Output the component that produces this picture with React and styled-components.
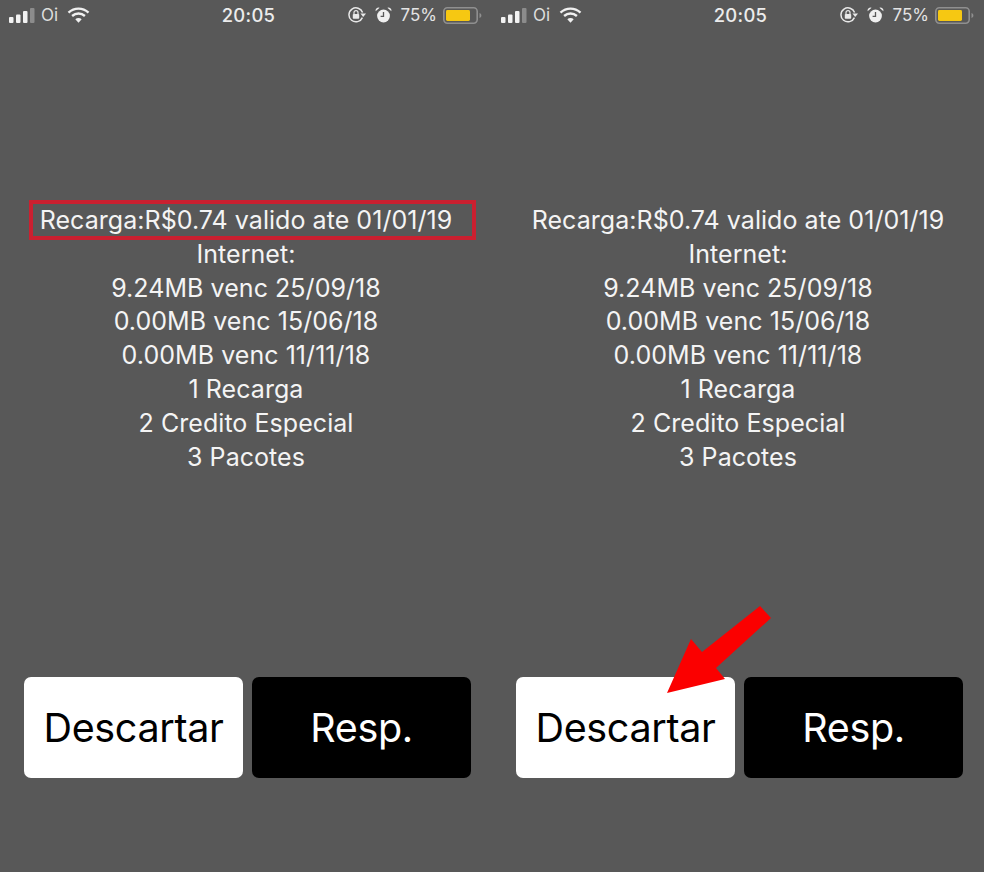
import React from "react";
import styled, { createGlobalStyle } from "styled-components";

const GlobalStyle = createGlobalStyle`
  html, body {
    margin: 0;
    padding: 0;
    background: #585858;
  }
`;

const Page = styled.div`
  display: flex;
  width: 984px;
  height: 872px;
  overflow: hidden;
  background: #585858;
  font-family: Inter, "Liberation Sans", sans-serif;
`;

const Screen = styled.div`
  position: relative;
  display: flex;
  flex-direction: column;
  width: 492px;
  height: 872px;
`;

const StatusBar = styled.div`
  display: grid;
  grid-template-columns: 1fr auto 1fr;
  align-items: center;
  height: 30px;
  padding: 0 10px 0 9px;
  color: #e9e9e9;
  font-size: 17px;
`;

const StatusLeft = styled.div`
  display: flex;
  align-items: center;
`;

const StatusRight = styled.div`
  display: flex;
  align-items: center;
  justify-content: flex-end;
`;

const Carrier = styled.span`
  margin: 0 9px 0 6px;
  font-size: 17px;
  color: #dddddd;
`;

const Clock = styled.span`
  padding-left: 6px;
  font-size: 18.4px;
  font-weight: 500;
  letter-spacing: 0.3px;
  color: #ececec;
`;

const Percent = styled.span`
  margin: 0 6px 0 9px;
  font-size: 17px;
  color: #e4e4e4;
`;

const Spacer = styled.span`
  width: 9px;
`;

const Message = styled.div`
  position: relative;
  margin-top: 174px;
  height: 473px;
  color: #f4f4f4;
  font-size: 25px;
  letter-spacing: 0.05px;
  line-height: 33.8px;
  text-align: center;
`;

const Line = styled.div`
  white-space: nowrap;
`;

const Highlight = styled.div`
  position: absolute;
  left: 29px;
  top: -4px;
  width: 439px;
  height: 32px;
  border: 4px solid #cb2030;
`;

const Actions = styled.div`
  display: flex;
  gap: 9px;
  padding-left: 24px;
`;

const Action = styled.div`
  display: flex;
  align-items: center;
  justify-content: center;
  width: 219px;
  height: 101px;
  border-radius: 7px;
  background: ${(p) => (p.$dark ? "#000000" : "#ffffff")};
  color: ${(p) => (p.$dark ? "#ffffff" : "#000000")};
  font-size: 39.5px;
  letter-spacing: -0.35px;
`;

const Arrow = styled.svg`
  position: absolute;
  left: 170px;
  top: 600px;
`;

function SignalIcon() {
  return (
    <svg width="26" height="16" viewBox="0 0 26 16">
      <rect x="0" y="10" width="4.5" height="6" rx="1" fill="#f2f2f2" />
      <rect x="7" y="7.5" width="4.5" height="8.5" rx="1" fill="#f2f2f2" />
      <rect x="14" y="4" width="4.5" height="12" rx="1" fill="#f2f2f2" />
      <rect x="21" y="1" width="4.5" height="15" rx="1" fill="#8c8c8c" />
    </svg>
  );
}

function WifiIcon() {
  return (
    <svg width="23" height="16" viewBox="0 0 22 16">
      <path d="M1 5.6C6.8 .3 15.2 .3 21 5.6" fill="none" stroke="#f0f0f0" strokeWidth="2.4" />
      <path d="M4.6 9C8.4 5.6 13.6 5.6 17.4 9" fill="none" stroke="#f0f0f0" strokeWidth="2.4" />
      <path d="M7.8 12.3L11 15.8L14.2 12.3C12.3 10.6 9.7 10.6 7.8 12.3Z" fill="#f0f0f0" />
    </svg>
  );
}

function RotationLockIcon() {
  return (
    <svg width="18" height="16" viewBox="0 0 18 16">
      <path d="M14.4 10.6A7 7 0 1 1 14.6 5.6" fill="none" stroke="#e8e8e8" strokeWidth="1.5" />
      <path d="M12.4 6.6L18 6.6L15.2 10Z" fill="#e8e8e8" />
      <rect x="4.8" y="7" width="6.4" height="4.8" rx="0.8" fill="#e8e8e8" />
      <path d="M6 7V5.6A2 2 0 0 1 10 5.6V7" fill="none" stroke="#e8e8e8" strokeWidth="1.2" />
    </svg>
  );
}

function AlarmIcon() {
  return (
    <svg width="17" height="16" viewBox="0 0 17 16">
      <circle cx="8.5" cy="9" r="6.4" fill="#efefef" />
      <path d="M8.5 5V9.4H5.6" fill="none" stroke="#585858" strokeWidth="1.3" />
      <path d="M.6 4.2A3 3 0 0 1 4.6 .8Z" fill="#efefef" />
      <path d="M16.4 4.2A3 3 0 0 0 12.4 .8Z" fill="#efefef" />
    </svg>
  );
}

function BatteryIcon() {
  return (
    <svg width="39" height="17" viewBox="0 0 39 17">
      <rect x="0.8" y="0.8" width="33.4" height="15.4" rx="3.6" fill="none" stroke="#8f8f8f" strokeWidth="1.6" />
      <rect x="3" y="3" width="24" height="11" rx="1.4" fill="#f6c812" />
      <path d="M36.5 6V11C37.8 10.6 38.4 9.6 38.4 8.5S37.8 6.4 36.5 6Z" fill="#8f8f8f" />
    </svg>
  );
}

function Phone({ highlighted, pointed }) {
  const lines = [
    "Recarga:R$0.74 valido ate 01/01/19",
    "Internet:",
    "9.24MB venc 25/09/18",
    "0.00MB venc 15/06/18",
    "0.00MB venc 11/11/18",
    "1 Recarga",
    "2 Credito Especial",
    "3 Pacotes",
  ];

  return (
    <Screen>
      <StatusBar>
        <StatusLeft>
          <SignalIcon />
          <Carrier>Oi</Carrier>
          <WifiIcon />
        </StatusLeft>
        <Clock>20:05</Clock>
        <StatusRight>
          <RotationLockIcon />
          <Spacer />
          <AlarmIcon />
          <Percent>75%</Percent>
          <BatteryIcon />
        </StatusRight>
      </StatusBar>
      <Message>
        {highlighted && <Highlight />}
        {lines.map((line) => (
          <Line key={line}>{line}</Line>
        ))}
      </Message>
      <Actions>
        <Action>Descartar</Action>
        <Action $dark>Resp.</Action>
      </Actions>
      {pointed && (
        <Arrow width="110" height="100" viewBox="0 0 110 100">
          <path d="M98 6L109 18L54 68L63 79L5 93L29 39L40 52Z" fill="#fb0000" />
        </Arrow>
      )}
    </Screen>
  );
}

export default function App() {
  return (
    <>
      <GlobalStyle />
      <Page>
        <Phone highlighted />
        <Phone pointed />
      </Page>
    </>
  );
}
